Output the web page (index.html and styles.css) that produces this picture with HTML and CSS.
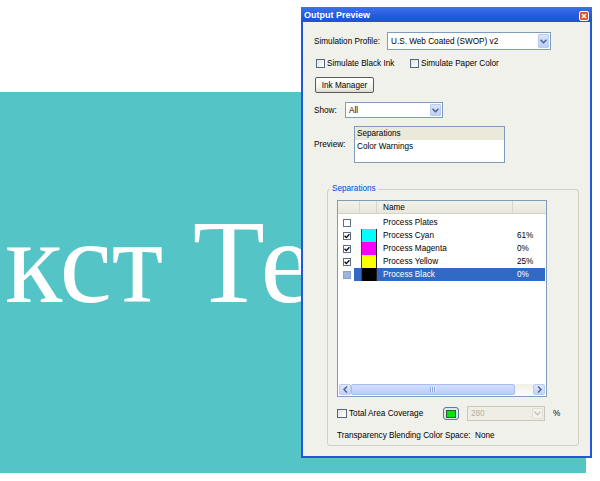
FILE: index.html
```html
<!DOCTYPE html>
<html lang="en">
<head>
	<meta charset="UTF-8">
	<title>Output Preview</title>
	<link rel="stylesheet" href="styles.css">
</head>
<body>
	<div class="banner">
		<p class="banner-text">кст Те</p>
	</div>

	<div class="dialog">
		<div class="titlebar">
			<span class="title">Output Preview</span>
			<span class="close-btn">
				<svg width="10" height="10" viewBox="0 0 10 10">
					<rect x="0.5" y="0.5" width="9" height="9" rx="1.5" fill="#e2542e" stroke="#fff"/>
					<path d="M3 3 L7 7 M7 3 L3 7" stroke="#fff" stroke-width="1.4"/>
				</svg>
			</span>
		</div>
		<div class="dialog-body">
			<div class="row row-profile">
				<span class="lbl lbl-profile">Simulation Profile:</span>
				<div class="combo combo-profile">
					<span class="combo-value">U.S. Web Coated (SWOP) v2</span>
					<span class="combo-arrow"><svg width="7" height="5" viewBox="0 0 7 5"><path d="M0.5 0.8 L3.5 3.8 L6.5 0.8" fill="none" stroke="#4d6185" stroke-width="1.4"/></svg></span>
				</div>
			</div>

			<div class="row row-checks">
				<span class="check check-black"><span class="box"></span>Simulate Black Ink</span>
				<span class="check"><span class="box"></span>Simulate Paper Color</span>
			</div>

			<div class="row row-btn">
				<span class="btn">Ink Manager</span>
			</div>

			<div class="row row-show">
				<span class="lbl lbl-show">Show:</span>
				<div class="combo combo-show">
					<span class="combo-value">All</span>
					<span class="combo-arrow"><svg width="7" height="5" viewBox="0 0 7 5"><path d="M0.5 0.8 L3.5 3.8 L6.5 0.8" fill="none" stroke="#4d6185" stroke-width="1.4"/></svg></span>
				</div>
			</div>

			<div class="row row-preview">
				<span class="lbl lbl-preview">Preview:</span>
				<div class="listbox">
					<div class="lb-item lb-sel">Separations</div>
					<div class="lb-item">Color Warnings</div>
				</div>
			</div>

			<fieldset class="group">
				<legend>Separations</legend>
				<div class="sep-table">
					<div class="sep-head">
						<span class="c1"></span>
						<span class="c2"></span>
						<span class="c3">Name</span>
						<span class="c4"></span>
					</div>
					<div class="sep-rows">
						<div class="sep-row">
							<span class="c1"><span class="mini-box"></span></span>
							<span class="c2"></span>
							<span class="c3">Process Plates</span>
							<span class="c4"></span>
						</div>
						<div class="sep-row">
							<span class="c1"><span class="mini-box checked"><svg width="6" height="6" viewBox="0 0 6 6"><path d="M0.6 2.8 L2.3 4.6 L5.4 1.2" fill="none" stroke="#000" stroke-width="1.3"/></svg></span></span>
							<span class="c2"><span class="swatch sw-cyan"></span></span>
							<span class="c3">Process Cyan</span>
							<span class="c4">61%</span>
						</div>
						<div class="sep-row">
							<span class="c1"><span class="mini-box checked"><svg width="6" height="6" viewBox="0 0 6 6"><path d="M0.6 2.8 L2.3 4.6 L5.4 1.2" fill="none" stroke="#000" stroke-width="1.3"/></svg></span></span>
							<span class="c2"><span class="swatch sw-magenta"></span></span>
							<span class="c3">Process Magenta</span>
							<span class="c4">0%</span>
						</div>
						<div class="sep-row">
							<span class="c1"><span class="mini-box checked"><svg width="6" height="6" viewBox="0 0 6 6"><path d="M0.6 2.8 L2.3 4.6 L5.4 1.2" fill="none" stroke="#000" stroke-width="1.3"/></svg></span></span>
							<span class="c2"><span class="swatch sw-yellow"></span></span>
							<span class="c3">Process Yellow</span>
							<span class="c4">25%</span>
						</div>
						<div class="sep-row sep-sel">
							<span class="c1"><span class="mini-box filled"></span></span>
							<span class="c2"><span class="swatch sw-black"></span></span>
							<span class="c3">Process Black</span>
							<span class="c4">0%</span>
						</div>
					</div>
					<div class="hscroll">
						<span class="sb-btn"><svg width="5" height="7" viewBox="0 0 5 7"><path d="M4 0.6 L1 3.5 L4 6.4" fill="none" stroke="#4d6185" stroke-width="1.4"/></svg></span>
						<span class="sb-thumb"><span class="grip"></span></span>
						<span class="sb-track"></span>
						<span class="sb-btn"><svg width="5" height="7" viewBox="0 0 5 7"><path d="M1 0.6 L4 3.5 L1 6.4" fill="none" stroke="#4d6185" stroke-width="1.4"/></svg></span>
					</div>
				</div>

				<div class="row row-tac">
					<span class="check check-tac"><span class="box"></span>Total Area Coverage</span>
					<span class="color-btn"><span class="green"></span></span>
					<div class="combo combo-off">
						<span class="combo-value">280</span>
						<span class="combo-arrow"><svg width="7" height="5" viewBox="0 0 7 5"><path d="M0.5 0.8 L3.5 3.8 L6.5 0.8" fill="none" stroke="#c4c2b6" stroke-width="1.4"/></svg></span>
					</div>
					<span class="pct">%</span>
				</div>

				<div class="row row-tbcs">
					<span class="tbcs-lbl">Transparency Blending Color Space:</span>
					<span>None</span>
				</div>
			</fieldset>
		</div>
	</div>
</body>
</html>
```

FILE: styles.css
```css
* {
	margin: 0;
	padding: 0;
	box-sizing: border-box;
}
body {
	background: #fff;
	font-family: "Liberation Sans", Arial, sans-serif;
	font-size: 8.2px;
	color: #000;
	width: 600px;
	height: 481px;
	overflow: hidden;
}

/* teal slide behind the window */
.banner {
	margin-top: 92px;
	width: 586px;
	height: 381px;
	background-color: #55c4c6;
	overflow: hidden;
	padding-top: 112px;
	padding-left: 5px;
}
.banner-text {
	font-family: "Liberation Serif", "Times New Roman", serif;
	font-size: 118px;
	line-height: 118px;
	color: #fff;
	white-space: nowrap;
}

/* dialog window */
.dialog {
	position: absolute;
	left: 301px;
	top: 7px;
	width: 291px;
	height: 451px;
	background: #2157d9;
	padding: 0 2px 2px 2px;
	display: flex;
	flex-direction: column;
}
.titlebar {
	height: 15px;
	display: flex;
	align-items: center;
	justify-content: space-between;
	background: linear-gradient(#3c72ec, #2459dc 60%, #2153d2);
	margin: 0 -2px;
	padding: 0 3px 0 3px;
}
.title {
	color: #fff;
	font-weight: bold;
	font-size: 9px;
}
.close-btn {
	display: flex;
	margin-top: 2px;
}
.dialog-body {
	flex: 1;
	background: #f1f1ec;
	padding: 10px 11px 0 11px;
}

.row {
	display: flex;
	align-items: center;
}
.row-profile {
	height: 18px;
}
.lbl-profile {
	width: 73px;
}
.row-checks {
	margin-top: 8px;
	height: 10px;
	padding-left: 2px;
}
.check {
	display: flex;
	align-items: center;
}
.check-black {
	width: 94px;
}
.box {
	width: 9px;
	height: 9px;
	border: 1px solid #54677d;
	background: linear-gradient(135deg, #e4e3dc, #fff);
	margin-right: 2px;
}
.row-btn {
	margin-top: 9px;
	height: 16px;
	padding-left: 1px;
}
.btn {
	width: 59px;
	height: 16px;
	border: 1px solid #5a5a5a;
	border-radius: 2px;
	background: linear-gradient(#fff, #f2f1ea 70%, #dcdad0);
	display: flex;
	align-items: center;
	justify-content: center;
}
.row-show {
	margin-top: 9px;
	height: 16px;
}
.lbl-show {
	width: 31px;
}
.row-preview {
	margin-top: 8px;
	height: 37px;
}
.lbl-preview {
	width: 40px;
}

/* combo boxes */
.combo {
	display: flex;
	align-items: stretch;
	border: 1px solid #7f9db9;
	background: #fff;
	padding: 1px;
}
.combo-profile {
	width: 164px;
	height: 18px;
}
.combo-show {
	width: 98px;
	height: 16px;
}
.combo-value {
	flex: 1;
	padding-left: 2px;
	display: flex;
	align-items: center;
}
.combo-arrow {
	width: 11px;
	border: 1px solid #b9cbf3;
	border-radius: 1px;
	background: linear-gradient(#d9e4fd, #bccdf6);
	display: flex;
	align-items: center;
	justify-content: center;
}
.combo-off {
	width: 78px;
	height: 15px;
	border-color: #c9c7ba;
	background: #efeee5;
	color: #b3b0a3;
}
.combo-off .combo-arrow {
	border-color: #e2e0d6;
	background: #f3f2ec;
}

/* list box */
.listbox {
	width: 151px;
	height: 37px;
	border: 1px solid #7f9db9;
	background: #fff;
}
.lb-item {
	height: 13px;
	line-height: 13px;
	padding-left: 2px;
}
.lb-sel {
	background: #ebe9da;
}

/* separations group */
.group {
	margin-top: 21px;
	margin-left: 13px;
	width: 252px;
	border: 1px solid #d2d0c2;
	border-radius: 3px;
	padding: 0 9px 5px 9px;
}
.group legend {
	color: #0046d5;
	line-height: 10px;
	padding: 0 2px;
	margin-left: -7px;
}
.sep-table {
	margin-top: 6px;
	width: 210px;
	height: 197px;
	border: 1px solid #7f9db9;
	background: #fff;
	display: flex;
	flex-direction: column;
}
.sep-head {
	height: 13px;
	display: flex;
	background: linear-gradient(#f3f2ea, #e9e7da);
	border-bottom: 1px solid #d6d3c5;
}
.sep-head span {
	border-right: 1px solid #d8d5c8;
	display: flex;
	align-items: center;
}
.sep-head .c4 {
	border-right: 0;
}
.c1 {
	width: 22px;
	padding-left: 5px;
	display: flex;
	align-items: center;
}
.c2 {
	width: 17px;
}
.c3 {
	width: 136px;
	padding-left: 6px;
}
.c4 {
	width: 33px;
	padding-left: 4px;
}
.sep-rows {
	padding-top: 2px;
	flex: 1;
}
.sep-row {
	height: 13px;
	display: flex;
	align-items: stretch;
}
.sep-row .c3,
.sep-row .c4 {
	display: flex;
	align-items: center;
}
.sep-sel {
	background: linear-gradient(to right, transparent 16px, #316ac5 16px, #316ac5 207px, transparent 207px);
	color: #fff;
}
.mini-box {
	width: 8px;
	height: 8px;
	border: 1px solid #5c6f84;
	background: #fff;
	display: flex;
	align-items: center;
	justify-content: center;
}
.mini-box.filled {
	background: #9fb4dd;
	border-color: #8aa2cf;
}
.swatch {
	display: block;
	margin-left: 1px;
	width: 16px;
	height: 13px;
	border-left: 1px solid #444;
	border-right: 1px solid #222;
}
.sw-cyan { background: #00ffff; }
.sw-magenta { background: #ff00ff; }
.sw-yellow { background: #ffff00; }
.sw-black { background: #000; }

/* horizontal scrollbar */
.hscroll {
	height: 11px;
	margin: 0 1px 1px 1px;
	display: flex;
	background: #f7f6f1;
}
.sb-btn {
	width: 12px;
	border: 1px solid #b9cbf3;
	border-radius: 2px;
	background: linear-gradient(#dde7fe, #c2d2f8);
	display: flex;
	align-items: center;
	justify-content: center;
}
.sb-thumb {
	width: 164px;
	border: 1px solid #a9bdf0;
	border-radius: 2px;
	background: linear-gradient(#d3e0fd, #bacdf8);
	display: flex;
	align-items: center;
	justify-content: center;
}
.grip {
	width: 6px;
	height: 5px;
	background: repeating-linear-gradient(to right, #8fa8e4 0 1px, #e6edfd 1px 2px);
}
.sb-track {
	flex: 1;
	background: linear-gradient(#f0efe8, #fcfcfa);
}

.row-tac {
	margin-top: 9px;
	height: 15px;
}
.check-tac {
	width: 106px;
}
.check-tac .box {
	width: 10px;
}
.color-btn {
	width: 16px;
	height: 13px;
	border: 1px solid #5e7898;
	border-radius: 3px;
	background: #dfe6f0;
	display: flex;
	align-items: center;
	justify-content: center;
	margin-right: 8px;
}
.green {
	width: 10px;
	height: 8px;
	background: #00e600;
	border: 1px solid #2f5f2f;
}
.pct {
	margin-left: 8px;
}
.row-tbcs {
	margin-top: 9px;
	height: 10px;
}
.tbcs-lbl {
	width: 138px;
}
```
